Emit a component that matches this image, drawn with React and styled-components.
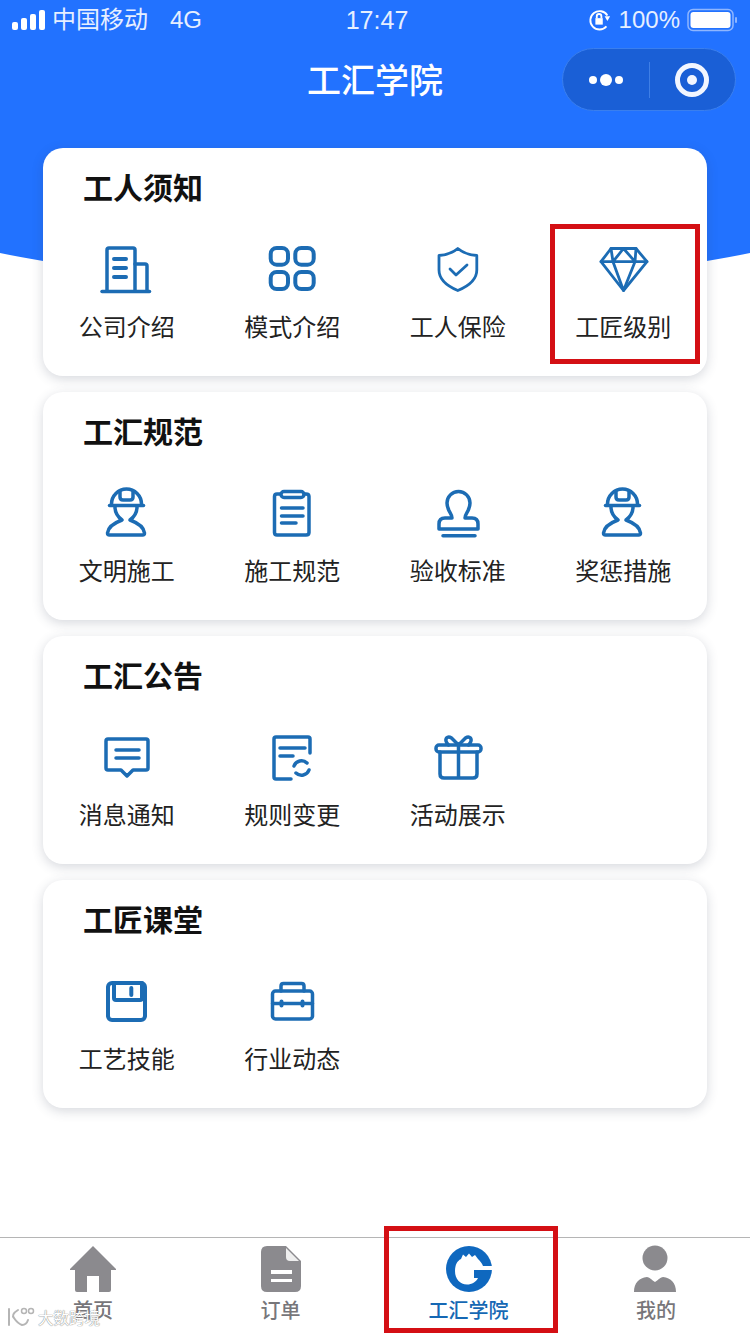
import React from "react";
import styled, { createGlobalStyle } from "styled-components";

const CN = `"Noto Sans CJK SC", "Liberation Sans", sans-serif`;
const BLUE = "#1c6cb4";

const Global = createGlobalStyle`
  html, body {
    margin: 0;
    padding: 0;
    background: #fff;
  }
  body {
    font-family: ${CN};
  }
`;

const Ic = ({ children, sw = 3.5 }) => (
  <svg width="56" height="56" viewBox="1 0 56 56" fill="none" stroke={BLUE} strokeWidth={sw} strokeLinecap="round" strokeLinejoin="round">
    {children}
  </svg>
);

const Building = () => (
  <Ic>
    <path d="M9 50V9q0-2 2-2h24q2 0 2 2v41" />
    <path d="M37 23h10q2 0 2 2v25" />
    <path d="M4 50.500h47.500" />
    <path d="M16 18h12M16 27h12M16 36h12" strokeWidth="4" />
  </Ic>
);
const Grid4 = () => (
  <Ic sw={4}>
    <rect x="7.700" y="7" width="17.300" height="16.700" rx="6" />
    <rect x="32.300" y="7" width="18.400" height="16.700" rx="6" />
    <rect x="7.700" y="31" width="17.300" height="17" rx="6" />
    <rect x="32.300" y="31" width="18.400" height="17" rx="6" />
  </Ic>
);
const Shield = () => (
  <Ic sw={2.8}>
    <path d="M28.800 7.500c5 4 12 6.500 19 7V29c0 9-8 16-19 20.500C18 45 10 38 10 29V14.500c7-.5 14-3 18.800-7z" />
    <path d="M21 28l6 6 11-10" />
  </Ic>
);
const Diamond = () => (
  <Ic sw={2.8}>
    <path d="M17 7.500h25l11 13.200-23.500 28.800L7 20.700z" />
    <path d="M7 20.700h46M29.500 7.500L19 20.700l10.500 28.800L41 20.700zM17 7.500l2 13.200M42 7.500l-1 13.200" />
  </Ic>
);
const Worker = () => (
  <Ic>
    <path d="M13.500 20v-1a15 15 0 0 1 30 0v1" />
    <path d="M11.500 20.500h34" />
    <path d="M22 6v6q0 3 3 3h7q3 0 3-3V6" />
    <path d="M17 22c0 6 3 10 7 13-8 3-14 8-14.500 13q0 2 2 2h33q2 0 2-2c-.5-5-6.500-10-14.500-13 4-3 7-7 7-13" />
  </Ic>
);
const Clipboard = () => (
  <Ic>
    <path d="M17 9h-3q-2.500 0-2.500 2.500v36q0 2.500 2.500 2.500h29q3 0 3-2.500v-36q0-2.500-3-2.500h-2" />
    <rect x="18" y="6.500" width="23" height="6" rx="3" />
    <path d="M18.500 23H40M18.500 31H40M18.500 38H33" />
  </Ic>
);
const Stamp = () => (
  <Ic>
    <path d="M23 33c0-5-5-7-5-15a11.500 11.500 0 0 1 23 0c0 8-5 10-5 15h7q6 0 6 6v5H10v-5q0-6 6-6z" />
    <path d="M14 50.700h32" />
  </Ic>
);
const Message = () => (
  <Ic>
    <path d="M10 10h38q2 0 2 2v27q0 2-2 2H35l-6 6-6-6H10q-2 0-2-2V12q0-2 2-2z" />
    <path d="M18 21h23M18 29h23" />
  </Ic>
);
const DocSync = () => (
  <Ic>
    <path d="M47 24V10q0-2-2-2H13q-2 0-2 2v38q0 2 2 2h15" />
    <path d="M17 19h25M17 27h13" />
    <path d="M31 37a8 8 0 0 1 13-3M46 41a8 8 0 0 1-13 3" />
  </Ic>
);
const Gift = () => (
  <Ic>
    <rect x="7" y="16" width="45" height="7" rx="3" />
    <path d="M11 23v22q0 4 4 4h29q4 0 4-4V23M29.500 16v33" />
    <path d="M29.500 16l-7-7q-3-2-5 0-2 3 2 7M29.500 16l7-7q3-2 5 0 2 3-2 7" />
  </Ic>
);
const Floppy = () => (
  <Ic sw={4}>
    <rect x="10" y="10" width="37" height="37" rx="4" />
    <path d="M16 10v15q0 2 2 2h24q2 0 2-2V10" />
    <path d="M33.300 15v7" />
  </Ic>
);
const Case = () => (
  <Ic>
    <rect x="9.500" y="18" width="40" height="28" rx="3" />
    <path d="M18 18v-5q0-2.500 2.500-2.500h18Q41 10.500 41 13v5M9.500 30.500h40" />
    <path d="M18.500 28.500v4M39.500 28.500v4" strokeWidth="4" />
  </Ic>
);

const NavGray = "#8b8a8e";

const HomeIcon = () => (
  <svg width="48" height="48" viewBox="0 0 48 48" fill={NavGray}>
    <path d="M24 1 47 24v1h-5v20q0 2-2 2H30V31h-12v16H8q-2 0-2-2V25H1v-1z" />
  </svg>
);
const OrderIcon = () => (
  <svg width="48" height="48" viewBox="0 0 48 48">
    <path fill={NavGray} d="M10 1h19l15 15v25q0 6-6 6H10q-6 0-6-6V7q0-6 6-6z" />
    <path fill="#eee" d="M29 3l13 13H33q-4 0-4-4z" />
    <path fill="#fff" d="M14 25h21v4H14zM14 34h21v3H14z" />
  </svg>
);
const AcademyIcon = () => (
  <svg width="48" height="48" viewBox="0 0 48 48">
    <circle cx="24" cy="24" r="23" fill="#0f68bf" />
    <path fill="#fff" d="M10 26C10 20 12 16 16 14L18 9.500L21 12L24 8.500L27 12L30 10L33 14C35 16 37 18 38 21L47.500 21L47.500 25L29 25L29 33L33 33C31 37 27 39.500 22 39.500C15 39.500 10 34 10 26Z" />
  </svg>
);
const MineIcon = () => (
  <svg width="48" height="48" viewBox="0 0 48 48" fill={NavGray}>
    <circle cx="23" cy="13" r="12.500" />
    <path d="M2 47c0-9 5-14 13-15 2 0 5 3 8 5 3-2 6-5 8-5 8 1 13 6 13 15z" />
  </svg>
);

const Header = styled.header`
  position: relative;
  isolation: isolate;
  height: 286px;
  overflow: hidden;
  color: #fff;
  &::before {
    content: "";
    position: absolute;
    z-index: -1;
    top: 0;
    bottom: 0;
    left: -225px;
    width: 1200px;
    background: #2272ff;
    border-radius: 0 0 600px 600px / 0 0 150px 150px;
  }
`;

const StatusBar = styled.div`
  height: 40px;
  padding: 0 12px;
  display: grid;
  grid-template-columns: 1fr auto 1fr;
  align-items: center;
  font-size: 24px;
  color: #e6efff;
  font-family: "Liberation Sans", ${CN};
`;

const StatusLeft = styled.div`
  display: flex;
  align-items: center;
  gap: 6px;
`;

const Carrier = styled.span`
  font-family: ${CN};
  font-size: 24px;
  line-height: 32px;
  padding-bottom: 4px;
  margin-right: 16px;
`;

const Clock = styled.span`
  font-size: 25px;
  margin-left: 4px;
`;

const StatusRight = styled.div`
  display: flex;
  justify-content: flex-end;
  align-items: center;
  gap: 7px;
`;

const TitleBar = styled.div`
  position: relative;
  height: 76px;
  display: flex;
  align-items: center;
  justify-content: center;
  font-size: 34px;
  font-weight: 500;
`;

const Capsule = styled.div`
  position: absolute;
  right: 14px;
  top: 8px;
  width: 174px;
  height: 63px;
  box-sizing: border-box;
  border-radius: 32px;
  background: #1a5fd6;
  border: 1px solid #3a7fee;
  display: flex;
  align-items: center;
`;

const CapsulePart = styled.div`
  flex: 1;
  height: 36px;
  display: flex;
  align-items: center;
  justify-content: center;
  gap: 3px;
  & + & {
    border-left: 1px solid #3f7fe6;
  }
`;

const Dot = styled.i`
  width: ${(p) => (p.$big ? 12 : 8)}px;
  height: ${(p) => (p.$big ? 12 : 8)}px;
  border-radius: 50%;
  background: #fff;
`;

const Ring = styled.i`
  width: 34px;
  height: 34px;
  box-sizing: border-box;
  border: 5px solid #f2f6ff;
  border-radius: 50%;
  display: flex;
  align-items: center;
  justify-content: center;
  &::after {
    content: "";
    width: 10px;
    height: 10px;
    border-radius: 50%;
    background: #f2f6ff;
  }
`;

const Cards = styled.main`
  position: relative;
  z-index: 1;
  margin-top: -138px;
  padding: 0 43px 40px;
  display: flex;
  flex-direction: column;
  gap: 16px;
`;

const Card = styled.section`
  height: 228px;
  box-sizing: border-box;
  padding: 18px 0 0 0;
  background: #fff;
  border-radius: 20px;
  box-shadow: 0 3px 12px rgba(50, 60, 85, 0.2);
`;

const CardTitle = styled.h2`
  margin: 0 0 0 40px;
  font-size: 30px;
  line-height: 40px;
  font-weight: 700;
  color: #111;
`;

const ItemGrid = styled.div`
  margin-top: 35px;
  padding-left: 1px;
  display: grid;
  grid-template-columns: repeat(4, 165.500px);
`;

const Item = styled.div`
  position: relative;
  display: flex;
  flex-direction: column;
  align-items: center;
  font-size: 24px;
  line-height: 34px;
  color: #222;
`;

const Label = styled.span`
  margin-top: 12px;
`;

const RedBox = styled.div`
  position: absolute;
  left: 9.500px;
  top: -17px;
  width: 150px;
  height: 140px;
  box-sizing: border-box;
  border: 5px solid #d40f14;
`;

const TabBar = styled.nav`
  position: fixed;
  z-index: 2;
  left: 0;
  right: 0;
  bottom: 0;
  height: 96px;
  border-top: 1px solid #b5b5b5;
  background: #fff;
  display: grid;
  grid-template-columns: 186px 189px 187px 188px;
`;

const Tab = styled.div`
  position: relative;
  display: flex;
  flex-direction: column;
  align-items: center;
  padding-top: 7px;
  font-size: 20px;
  line-height: 26px;
  font-weight: 500;
  color: ${(p) => (p.$active ? "#1668b4" : "#77767a")};
`;

const TabLabel = styled.span`
  margin-top: 4px;
`;

const TabBox = styled.div`
  position: absolute;
  left: 9px;
  top: -12px;
  width: 174px;
  height: 107px;
  box-sizing: border-box;
  border: 5px solid #d40f14;
`;

const Watermark = styled.div`
  position: absolute;
  left: 7px;
  bottom: 6px;
  display: flex;
  align-items: center;
  gap: 3px;
  font-size: 15.500px;
  line-height: 22px;
  font-weight: 400;
  color: #fff;
  text-shadow: 0 0 1px #888, 0 0 1px #888;
`;

const sections = [
  {
    title: "工人须知",
    items: [
      ["公司介绍", <Building />],
      ["模式介绍", <Grid4 />],
      ["工人保险", <Shield />],
      ["工匠级别", <Diamond />, true],
    ],
  },
  {
    title: "工汇规范",
    items: [
      ["文明施工", <Worker />],
      ["施工规范", <Clipboard />],
      ["验收标准", <Stamp />],
      ["奖惩措施", <Worker />],
    ],
  },
  {
    title: "工汇公告",
    items: [
      ["消息通知", <Message />],
      ["规则变更", <DocSync />],
      ["活动展示", <Gift />],
    ],
  },
  {
    title: "工匠课堂",
    items: [
      ["工艺技能", <Floppy />],
      ["行业动态", <Case />],
    ],
  },
];

export default function App() {
  return (
    <>
      <Global />
      <Header>
        <StatusBar>
          <StatusLeft>
            <svg width="34" height="22" viewBox="0 0 34 22" fill="#fff">
              <rect x="0" y="13" width="6" height="8" rx="2" />
              <rect x="9" y="9" width="6" height="12" rx="2" />
              <rect x="18" y="5" width="6" height="16" rx="2" />
              <rect x="27" y="1" width="6" height="20" rx="2" />
            </svg>
            <Carrier>中国移动</Carrier>
            <span>4G</span>
          </StatusLeft>
          <Clock>17:47</Clock>
          <StatusRight>
            <svg width="24" height="24" viewBox="0 0 26 24" fill="none" stroke="#fff" strokeWidth="2">
              <path d="M20 19A10 10 0 1 1 21 7" />
              <path d="M18 8h6l-3 5z" fill="#fff" stroke="none" />
              <rect x="8" y="10" width="8" height="7" fill="#fff" stroke="none" />
              <path d="M9.500 10V8a2.500 2.500 0 0 1 5 0v2" />
            </svg>
            <span>100%</span>
            <svg width="51" height="24" viewBox="0 0 51 24">
              <rect x="1" y="1.500" width="45" height="21" rx="5" fill="none" stroke="#8fb6ff" strokeWidth="1.500" />
              <rect x="3.500" y="4" width="40" height="16" rx="3" fill="#fff" />
              <rect x="48" y="9" width="2" height="6" rx="1" fill="#8fb6ff" />
            </svg>
          </StatusRight>
        </StatusBar>
        <TitleBar>
          工汇学院
          <Capsule>
            <CapsulePart>
              <Dot />
              <Dot $big />
              <Dot />
            </CapsulePart>
            <CapsulePart>
              <Ring />
            </CapsulePart>
          </Capsule>
        </TitleBar>
      </Header>
      <Cards>
        {sections.map((s) => (
          <Card key={s.title}>
            <CardTitle>{s.title}</CardTitle>
            <ItemGrid>
              {s.items.map(([label, icon, boxed]) => (
                <Item key={label}>
                  {boxed && <RedBox />}
                  {icon}
                  <Label>{label}</Label>
                </Item>
              ))}
            </ItemGrid>
          </Card>
        ))}
      </Cards>
      <TabBar>
        <Tab>
          <HomeIcon />
          <TabLabel>首页</TabLabel>
          <Watermark>
            <svg width="28" height="20" viewBox="0 0 28 20" fill="none" stroke="#b5b5b5" strokeWidth="2" strokeLinecap="round">
              <path d="M2 2v16M11 3C6 6 5 9 7 11c2 3 5 6 8 7 3 0 5-2 6-5" />
              <circle cx="17" cy="4" r="2.500" strokeWidth="1.500" />
              <circle cx="24" cy="4" r="2.500" strokeWidth="1.500" />
            </svg>
            大数跨境
          </Watermark>
        </Tab>
        <Tab>
          <OrderIcon />
          <TabLabel>订单</TabLabel>
        </Tab>
        <Tab $active>
          <TabBox />
          <AcademyIcon />
          <TabLabel>工汇学院</TabLabel>
        </Tab>
        <Tab>
          <MineIcon />
          <TabLabel>我的</TabLabel>
        </Tab>
      </TabBar>
    </>
  );
}
